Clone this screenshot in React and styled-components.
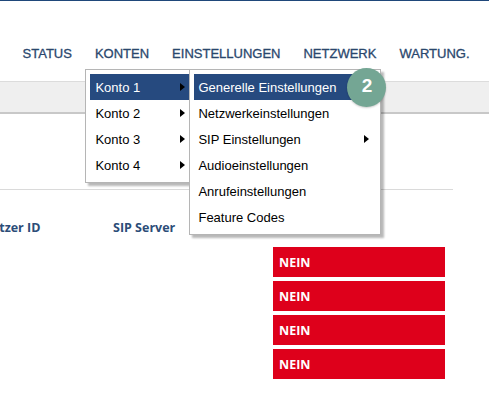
import React from "react";
import styled, { createGlobalStyle } from "styled-components";

const navItems = ["STATUS", "KONTEN", "EINSTELLUNGEN", "NETZWERK", "WARTUNG."];
const konten = ["Konto 1", "Konto 2", "Konto 3", "Konto 4"];
const settings = [
    { label: "Generelle Einstellungen", active: true },
    { label: "Netzwerkeinstellungen" },
    { label: "SIP Einstellungen", sub: true },
    { label: "Audioeinstellungen" },
    { label: "Anrufeinstellungen" },
    { label: "Feature Codes" },
];
const rows = [1, 2, 3, 4];

const App = () => {
    return (
        <Page>
            <GlobalStyle />
            <TopRule />
            <Header>
                {navItems.map((n) => (
                    <NavItem key={n}>
                        {n}
                        {n === "KONTEN" && (
                            <Dropdown>
                                <Menu>
                                    {konten.map((k, idx) => (
                                        <MenuItem key={k} $active={idx === 0}>
                                            <span>{k}</span>
                                            <Arrow />
                                        </MenuItem>
                                    ))}
                                    <SubMenu>
                                        {settings.map((s) => (
                                            <SubItem key={s.label} $active={s.active}>
                                                <span>{s.label}</span>
                                                {s.sub && <Arrow />}
                                            </SubItem>
                                        ))}
                                        <Badge>2</Badge>
                                    </SubMenu>
                                </Menu>
                            </Dropdown>
                        )}
                    </NavItem>
                ))}
            </Header>
            <GrayBar />
            <Table>
                <Row>
                    <HeadCell>Benutzer ID</HeadCell>
                    <HeadCell>SIP Server</HeadCell>
                    <HeadCell $indent>Registrierung</HeadCell>
                </Row>
                {rows.map((r) => (
                    <Row key={r}>
                        <Cell />
                        <Cell />
                        <Status>NEIN</Status>
                    </Row>
                ))}
            </Table>
        </Page>
    );
};

const GlobalStyle = createGlobalStyle`
    html, body {
        margin: 0;
        padding: 0;
        background: #fff;
    }
    body {
        width: 489px;
        height: 394px;
        overflow: hidden;
        font-family: "Liberation Sans", Arial, Helvetica, sans-serif;
    }
`

const Page = styled.div`
    width: 489px;
    height: 394px;
    overflow: hidden;
`

const TopRule = styled.div`
    height: 1px;
    background: #1f477a;
`

const Header = styled.nav`
    position: relative;
    z-index: 5;
    display: flex;
    justify-content: flex-end;
    padding: 40px 8px 0 0;
`

const NavItem = styled.div`
    position: relative;
    padding: 0 11.5px;
    height: 26px;
    line-height: 26px;
    font-size: 13px;
    color: #2a476d;
    -webkit-text-stroke: 0.3px #2a476d;
    white-space: nowrap;
`

const Dropdown = styled.div`
    position: absolute;
    top: calc(100% + 2px);
    left: 2px;
    z-index: 10;
    line-height: normal;
    -webkit-text-stroke: 0;
`

const Menu = styled.div`
    position: relative;
    width: 104px;
    background: #fff;
    border: 1px solid #b5b5b5;
    box-shadow: 3px 3px 2px rgba(0, 0, 0, 0.28);
    padding: 4px 0 4px 4px;
`

const MenuItem = styled.div`
    display: flex;
    align-items: center;
    justify-content: space-between;
    width: 99px;
    box-sizing: border-box;
    height: 26px;
    padding: 0 4px 0 5px;
    font-size: 13px;
    color: ${(p) => (p.$active ? "#fff" : "#000")};
    background: ${(p) => (p.$active ? "#264a7f" : "transparent")};
`

const SubMenu = styled.div`
    position: absolute;
    top: -1px;
    left: 103px;
    width: 182px;
    background: #fff;
    border: 1px solid #b5b5b5;
    box-shadow: 3px 3px 2px rgba(0, 0, 0, 0.28);
    padding: 4px;
`

const SubItem = styled(MenuItem)`
    width: 182px;
    padding: 0 7px 0 4px;
`

const Arrow = styled.i`
    width: 0;
    height: 0;
    border-left: 5px solid #000;
    border-top: 4px solid transparent;
    border-bottom: 4px solid transparent;
`

const Badge = styled.div`
    position: absolute;
    left: 157px;
    top: -2px;
    width: 39px;
    height: 39px;
    border-radius: 50%;
    background: #74a694;
    box-shadow: 0 1px 2px rgba(0, 0, 0, 0.2);
    color: #fff;
    font-size: 19px;
    font-weight: bold;
    display: flex;
    align-items: center;
    justify-content: center;
    padding-bottom: 3px;
    box-sizing: border-box;
`

const GrayBar = styled.div`
    margin-top: 14px;
    height: 30px;
    background: #efefef;
    border-top: 1px solid #dcdcdc;
    border-bottom: 2px solid #c8c8c8;
`

const Table = styled.div`
    margin: 75px 0 0 -33px;
    width: 486px;
    border-top: 1px solid #dadada;
    padding-top: 29px;
    display: flex;
    flex-direction: column;
    gap: 4px;
    font-family: "Open Sans", "Liberation Sans", sans-serif;
`

const Row = styled.div`
    display: grid;
    grid-template-columns: 146px 160px 172px;
    &:first-child {
        margin-bottom: 6px;
    }
`

const HeadCell = styled.div`
    font-size: 12.5px;
    line-height: 18px;
    font-weight: 700;
    color: #2c4d78;
    padding-left: ${(p) => (p.$indent ? "19px" : "0")};
    white-space: nowrap;
`

const Cell = styled.div``

const Status = styled.div`
    height: 30px;
    display: flex;
    align-items: center;
    padding-left: 6px;
    background: #de001b;
    color: #fff;
    font-size: 12.5px;
    font-weight: 700;
`

export default App;
